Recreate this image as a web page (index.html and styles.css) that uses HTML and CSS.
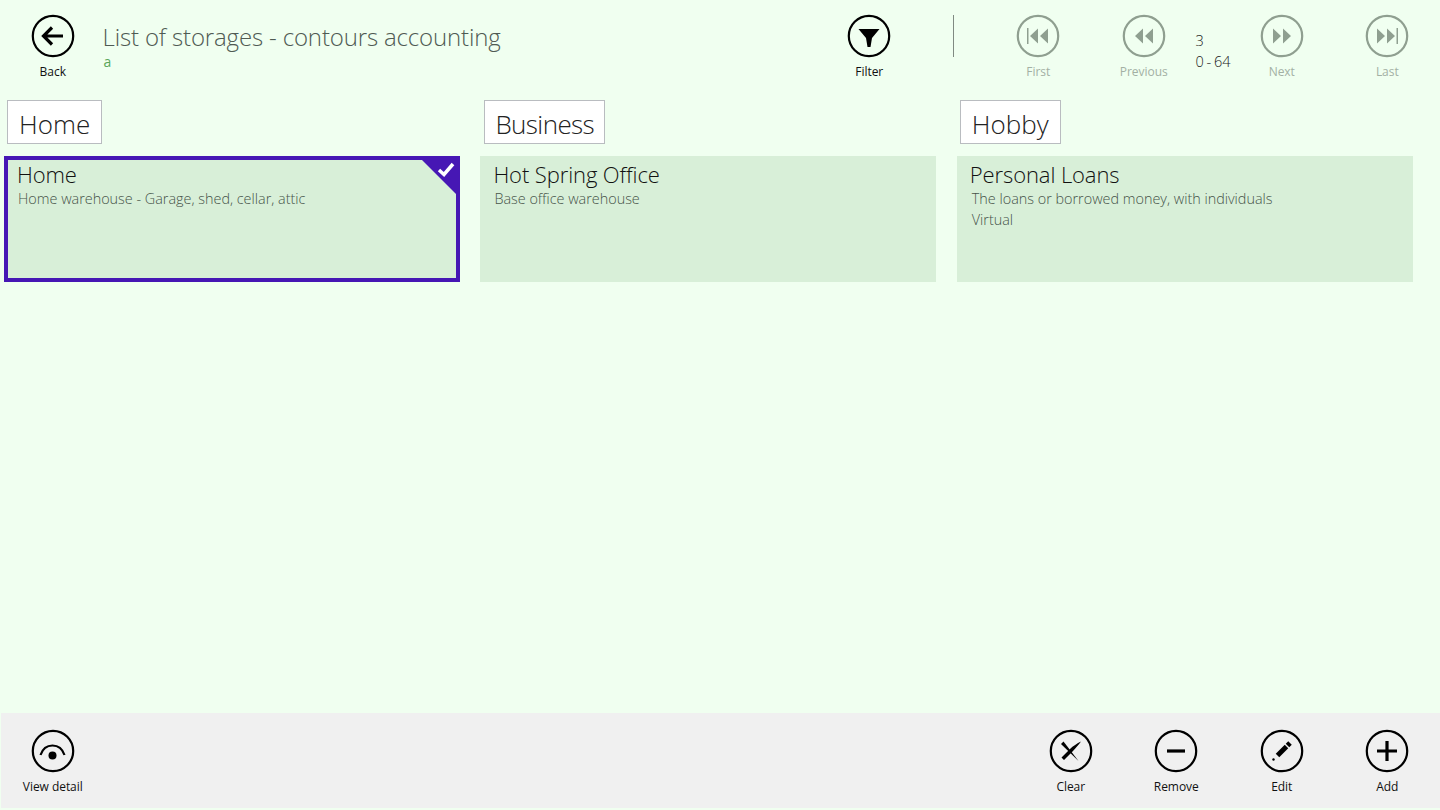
FILE: index.html
```html
<!DOCTYPE html>
<html lang="en">
<head>
<meta charset="utf-8">
<title>List of storages - contours accounting</title>
<link rel="stylesheet" href="styles.css">
</head>
<body>
<div class="page">
  <header class="top">
    <button class="cmd">
      <svg class="ico" viewBox="0 0 44 44"><circle cx="22" cy="22" r="20.200"/><path class="thick" d="M32 22H13M21 13.500 12.500 22l8.500 8.500"/></svg>
      <span class="lbl">Back</span>
    </button>
    <div class="titles">
      <div class="title">List of storages - contours accounting</div>
      <div class="sub">a</div>
    </div>
    <button class="cmd">
      <svg class="ico" viewBox="0 0 44 44"><circle cx="22" cy="22" r="20.200"/><path class="fill" d="M11.500 15h21L25 24l-1.500 9h-3L19 24z"/></svg>
      <span class="lbl">Filter</span>
    </button>
    <div class="sep"></div>
    <button class="cmd off">
      <svg class="ico" viewBox="0 0 44 44"><circle cx="22" cy="22" r="20.200"/><path class="fill" d="M11 14h1.500v16H11zM22 14.500v15L14 22zM32 14.500v15L24 22z"/></svg>
      <span class="lbl">First</span>
    </button>
    <button class="cmd off">
      <svg class="ico" viewBox="0 0 44 44"><circle cx="22" cy="22" r="20.200"/><path class="fill" d="M21 14.500v15L13 22zM31 14.500v15L23 22z"/></svg>
      <span class="lbl">Previous</span>
    </button>
    <div class="pager"><div>3</div><div class="range">0 - 64</div></div>
    <button class="cmd off">
      <svg class="ico" viewBox="0 0 44 44"><circle cx="22" cy="22" r="20.200"/><path class="fill" d="M13 14.500v15L21 22zM23 14.500v15L31 22z"/></svg>
      <span class="lbl">Next</span>
    </button>
    <button class="cmd off">
      <svg class="ico" viewBox="0 0 44 44"><circle cx="22" cy="22" r="20.200"/><path class="fill" d="M12 14.500v15L20 22zM22 14.500v15L30 22zM31.500 14H33v16h-1.500z"/></svg>
      <span class="lbl">Last</span>
    </button>
  </header>

  <main class="groups">
    <section class="group">
      <h2 class="ghead">Home</h2>
      <article class="card selected">
        <h3 class="name">Home</h3>
        <p class="line">Home warehouse - Garage, shed, cellar, attic</p>
        <span class="corner"></span>
        <svg class="tick" viewBox="0 0 18 15"><path d="M2 8 7 12.500 16 2"/></svg>
      </article>
    </section>
    <section class="group">
      <h2 class="ghead tight">Business</h2>
      <article class="card">
        <h3 class="name">Hot Spring Office</h3>
        <p class="line">Base office warehouse</p>
      </article>
    </section>
    <section class="group">
      <h2 class="ghead">Hobby</h2>
      <article class="card">
        <h3 class="name">Personal Loans</h3>
        <p class="line">The loans or borrowed money, with individuals</p>
        <p class="line">Virtual</p>
      </article>
    </section>
  </main>

  <footer class="bottom">
    <button class="cmd first">
      <svg class="ico" viewBox="0 0 44 44"><circle cx="22" cy="22" r="20.200"/><path class="thin" d="M9.500 26C11.500 20 16 16.500 21.500 16.500S31.500 20 33.500 26"/><circle class="fill" cx="21.500" cy="26.500" r="4"/></svg>
      <span class="lbl">View detail</span>
    </button>
    <div class="grow"></div>
    <button class="cmd">
      <svg class="ico" viewBox="0 0 44 44"><circle cx="22" cy="22" r="20.200"/><path class="fill" d="M12 15l2.500-2.500L29.500 32z"/><path class="fill" d="M12.500 28.500l2.500 2.500 9-9C27 18.500 30 15.500 32 12.500 28 14.500 24 17 21 20z"/></svg>
      <span class="lbl">Clear</span>
    </button>
    <button class="cmd">
      <svg class="ico" viewBox="0 0 44 44"><circle cx="22" cy="22" r="20.200"/><path class="thick" d="M13 22h18"/></svg>
      <span class="lbl">Remove</span>
    </button>
    <button class="cmd">
      <svg class="ico" viewBox="0 0 44 44"><circle cx="22" cy="22" r="20.200"/><path class="pen" d="M17.500 26.500 26.500 17.500"/><path class="pen" d="M27.500 16.500 30 14"/><circle class="fill" cx="13.500" cy="30.500" r="1.200"/></svg>
      <span class="lbl">Edit</span>
    </button>
    <button class="cmd">
      <svg class="ico" viewBox="0 0 44 44"><circle cx="22" cy="22" r="20.200"/><path class="thick" d="M22 12v20M12 22h20"/></svg>
      <span class="lbl">Add</span>
    </button>
  </footer>
</div>
</body>
</html>
```
FILE: styles.css
```css
* { box-sizing: border-box; }
html, body { margin: 0; padding: 0; }
body { width: 1440px; height: 810px; overflow: hidden; background: #f0fff0; font-family: "Open Sans", "Noto Sans", sans-serif; color: #111; }
.page { height: 810px; display: flex; flex-direction: column; }

.top { height: 100px; display: flex; align-items: flex-start; padding-top: 14px; }
.cmd { width: 105.500px; flex: none; display: flex; flex-direction: column; align-items: center; padding: 0; border: 0; background: none; color: #111; font: inherit; }
.cmd.first { margin-left: -1px; }
.ico { width: 44px; height: 44px; display: block; fill: none; stroke: #000; stroke-width: 2.200; }
.ico .fill { fill: #000; stroke: none; }
.ico .thick { stroke-width: 3.200; }
.ico .thin { stroke-width: 2.200; }
.ico .pen { stroke-width: 5; }
.lbl { font-size: 12px; line-height: 16px; margin-top: 6px; font-weight: 400; white-space: nowrap; letter-spacing: -0.05px; }
.off .ico { stroke: #8f9f90; }
.off .ico .fill { fill: #8f9f90; }
.off .lbl { color: #a3b0a4; }

.titles { flex: 1; margin-left: -3px; padding-top: 6px; }
.title { font-size: 24px; line-height: 33px; font-weight: 300; letter-spacing: -0.15px; color: #4f5a53; white-space: nowrap; }
.sub { font-size: 14px; line-height: 14px; margin-top: 2px; color: #5aa65a; font-weight: 400; margin-left: 1px; }
.sep { width: 1px; height: 42px; background: #808a82; margin: 1px 32px 0 30.500px; flex: none; }
.pager { width: 33.500px; flex: none; margin-left: -1px; padding-top: 16px; font-size: 14.500px; line-height: 21px; font-weight: 300; color: #222; white-space: nowrap; }
.range { word-spacing: -1px; }

.groups { flex: 1; display: flex; gap: 20.400px; padding-left: 4px; align-items: flex-start; }
.group { width: 456px; flex: none; display: flex; flex-direction: column; align-items: flex-start; }
.ghead { margin: 0 0 12px 3px; height: 44px; padding: 0 11px; border: 1px solid #b9bcc0; background: #fff; font-size: 26px; line-height: 46px; font-weight: 300; color: #222; }
.ghead.tight { letter-spacing: -0.600px; margin-left: 4px; padding: 0 10px; }
.card { position: relative; width: 456px; height: 126px; background: #d8efd8; padding: 4px 13px; }
.card.selected { border: 4px solid #4617b4; padding: 0 9px; }
.name { margin: 0; font-size: 22px; line-height: 28px; font-weight: 300; letter-spacing: -0.100px; color: #111; white-space: nowrap; }
.line { margin: 0 0 0 1px; font-size: 14.400px; line-height: 21px; font-weight: 300; color: #465349; white-space: nowrap; }
.group:last-child .line { margin-left: 2px; }
.corner { position: absolute; top: 0; right: 0; width: 34px; height: 34px; background: #4617b4; clip-path: polygon(0 0, 100% 0, 100% 100%); }
.tick { position: absolute; top: 2px; right: 1px; width: 18px; height: 15px; fill: none; stroke: #fff; stroke-width: 3.500; }

.bottom { height: 95px; margin: 0 0 2px 1px; background: #f0f0f0; display: flex; align-items: flex-start; padding-top: 16px; }
.grow { flex: 1; }
```
